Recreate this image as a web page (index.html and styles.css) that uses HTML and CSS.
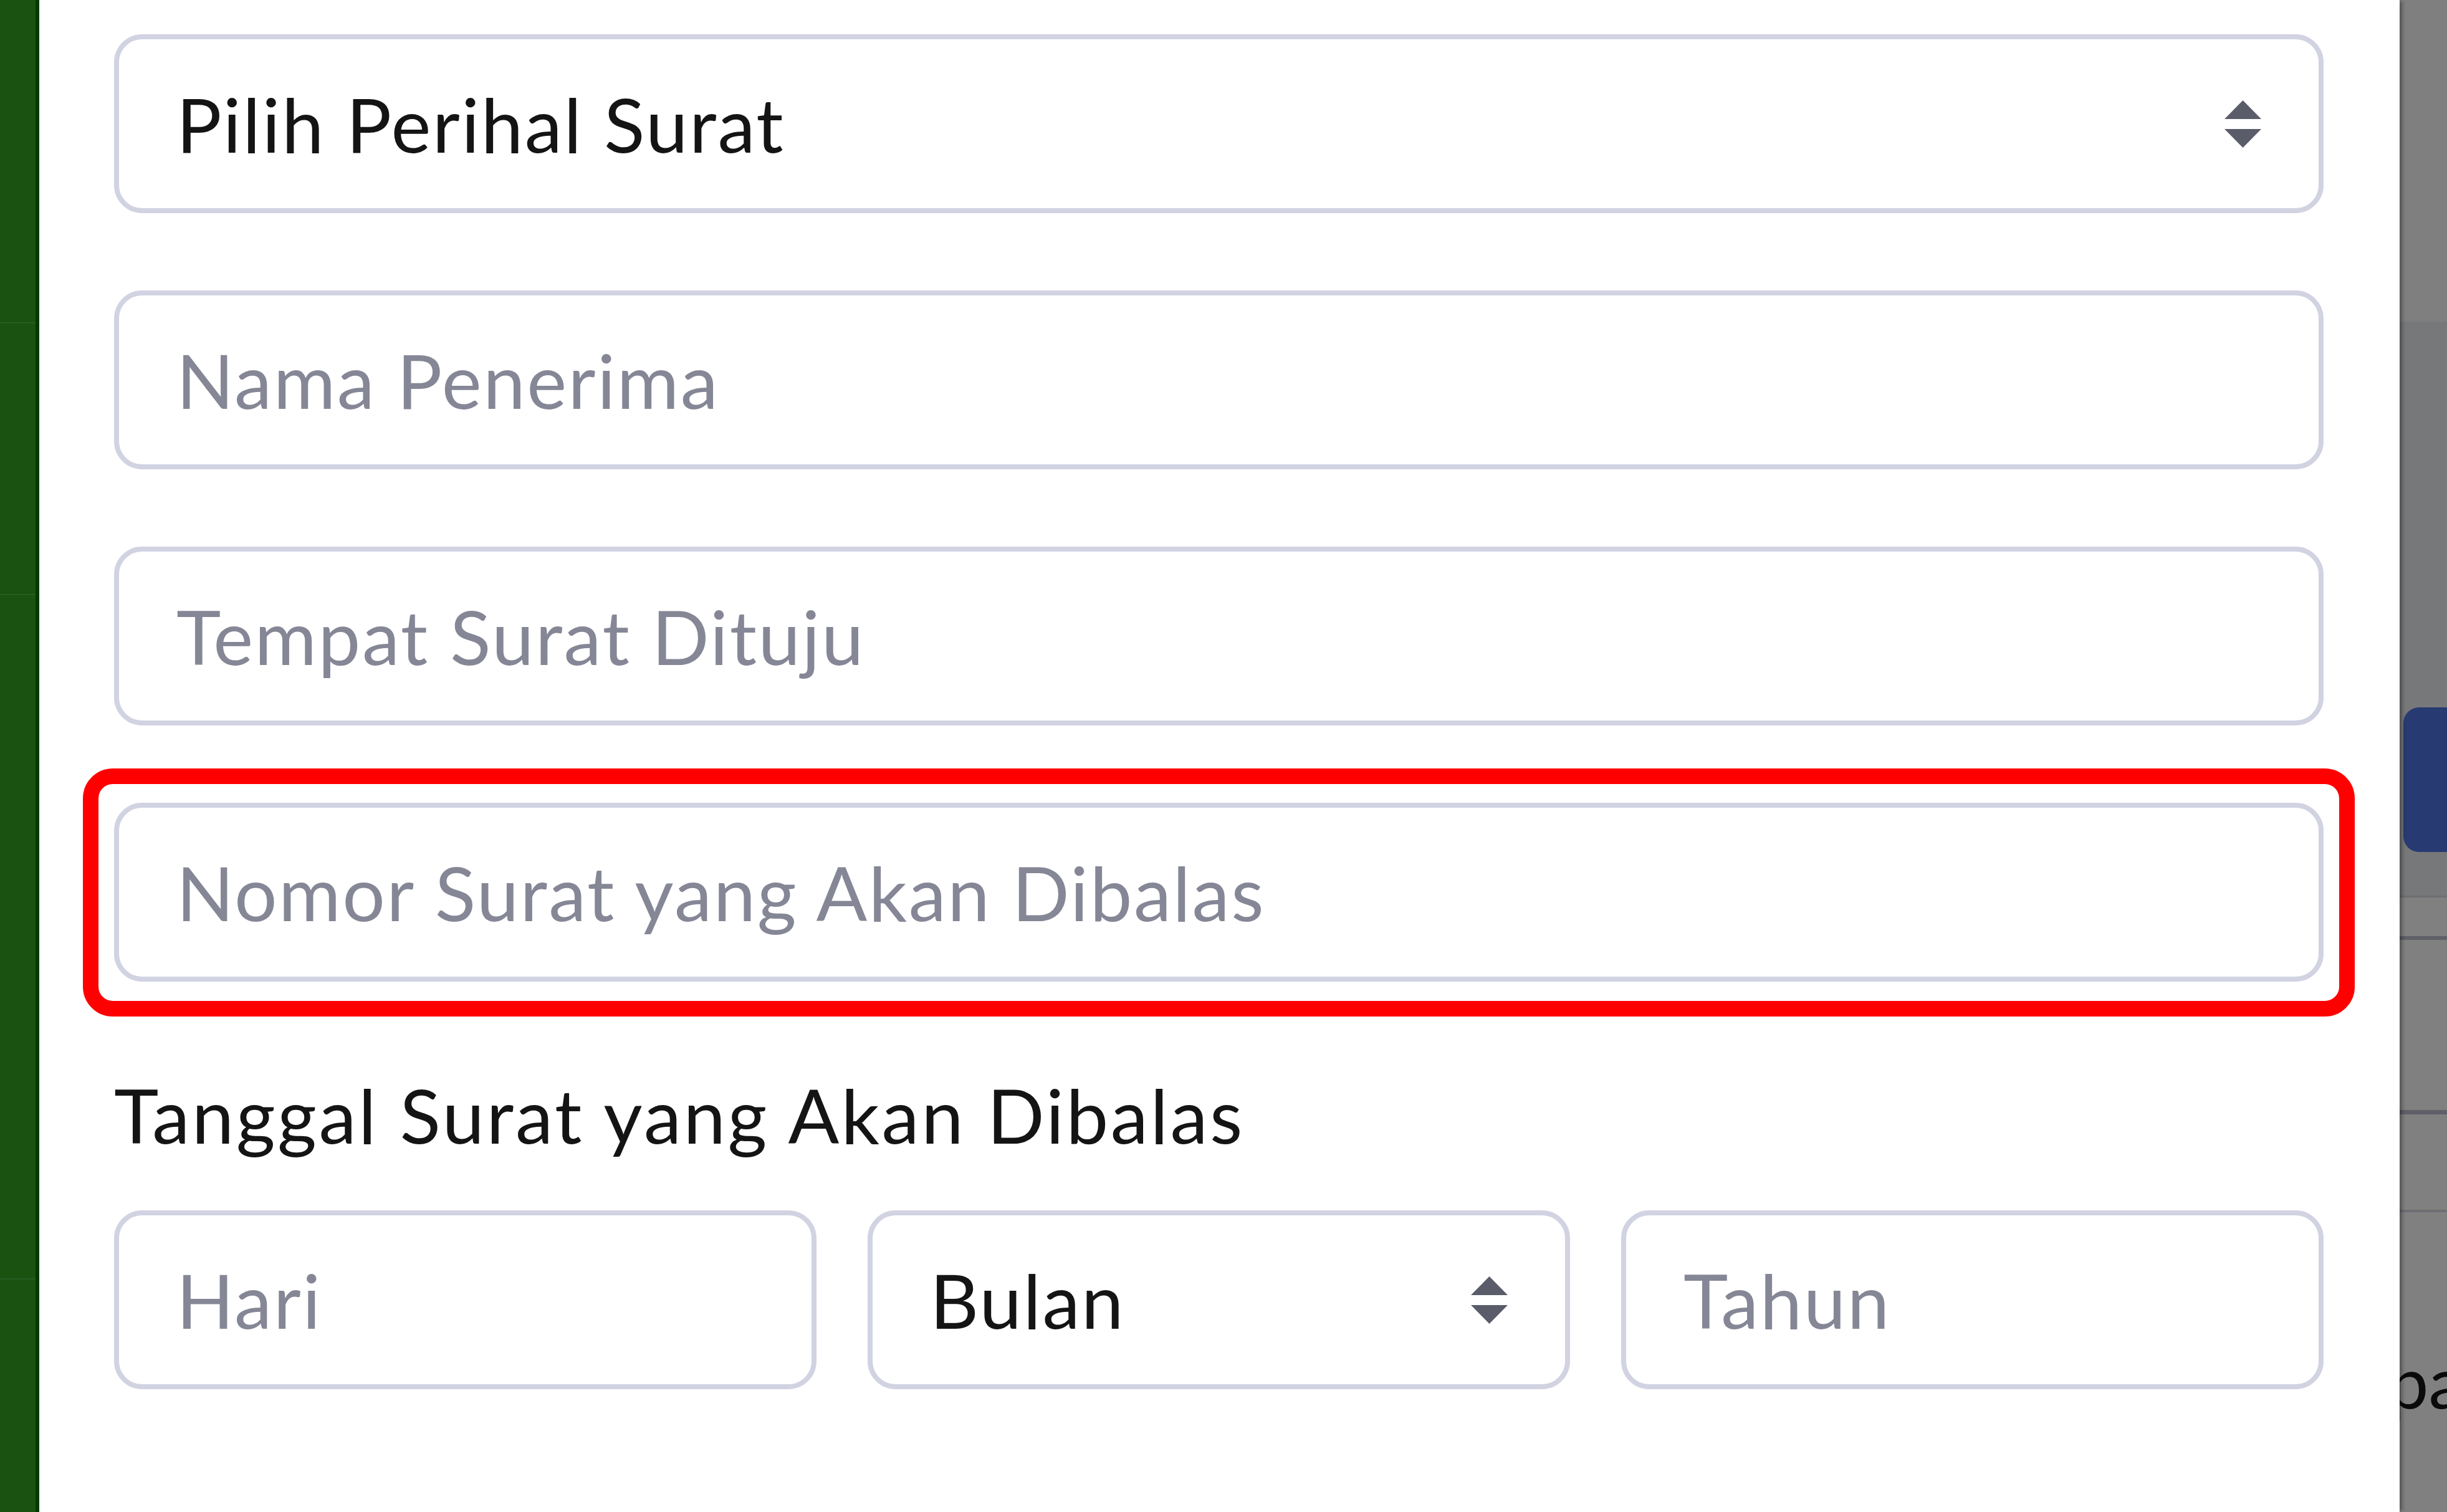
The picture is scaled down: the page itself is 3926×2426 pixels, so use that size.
FILE: index.html
```html
<!DOCTYPE html>
<html lang="id">
<head>
<meta charset="utf-8">
<title>Form Surat</title>
<link rel="stylesheet" href="styles.css">
</head>
<body>
<div class="page">
  <aside class="sidebar">
    <div class="sb-seg sb-1"></div>
    <div class="sb-seg sb-2"></div>
    <div class="sb-seg sb-3"></div>
    <div class="sb-rest"></div>
  </aside>

  <main class="modal">
    <form class="form">
      <div class="field select">
        <span class="value">Pilih Perihal Surat</span>
        <svg class="caret" viewBox="0 0 59 76" width="59" height="76" aria-hidden="true">
          <polygon points="29.5,0 59,30 0,30"/>
          <polygon points="0,46 59,46 29.5,76"/>
        </svg>
      </div>
      <div class="field"><span class="ph">Nama Penerima</span></div>
      <div class="field"><span class="ph">Tempat Surat Dituju</span></div>
      <div class="highlight">
        <div class="field field-last"><span class="ph">Nomor Surat yang Akan Dibalas</span></div>
      </div>
      <div class="label">Tanggal Surat yang Akan Dibalas</div>
      <div class="date-row">
        <div class="field"><span class="ph">Hari</span></div>
        <div class="field select">
          <span class="value">Bulan</span>
          <svg class="caret" viewBox="0 0 59 76" width="59" height="76" aria-hidden="true">
            <polygon points="29.5,0 59,30 0,30"/>
            <polygon points="0,46 59,46 29.5,76"/>
          </svg>
        </div>
        <div class="field"><span class="ph">Tahun</span></div>
      </div>
    </form>
  </main>

  <aside class="backdrop">
    <div class="bd-top"></div>
    <div class="bd-band">
      <div class="bd-button"><span class="bd-btn-text">I</span></div>
    </div>
    <div class="bd-line bd-line-1"></div>
    <div class="bd-gap bd-gap-1"></div>
    <div class="bd-line bd-line-2"></div>
    <div class="bd-gap bd-gap-2"></div>
    <div class="bd-line bd-line-3"></div>
    <div class="bd-gap bd-gap-3"></div>
    <div class="bd-line bd-line-4"></div>
    <div class="bd-rest"><span class="bd-text">pa</span></div>
  </aside>
</div>
</body>
</html>
```

FILE: styles.css
```css
* { box-sizing: border-box; }

html, body {
  margin: 0;
  padding: 0;
  width: 3926px;
  height: 2426px;
  overflow: hidden;
  background: #ffffff;
  font-family: "Lato", "Noto Sans", sans-serif;
}

.page {
  display: flex;
  width: 3926px;
  height: 2426px;
}

/* ---------- left dimmed sidebar ---------- */
.sidebar {
  width: 63px;
  flex: 0 0 63px;
  background: #1a5212;
  border-right: 6px solid #023b02;
  display: flex;
  flex-direction: column;
}
.sb-seg { border-bottom: 2px solid #2a5d24; }
.sb-1 { height: 519px; }
.sb-2 { height: 436px; }
.sb-3 { height: 1098px; }
.sb-rest { flex: 1; }

/* ---------- modal ---------- */
.modal {
  flex: 1;
  background: #ffffff;
  position: relative;
  z-index: 2;
  padding: 55px 122px 0 120px;
  box-shadow: 6px 0 6px -2px rgba(0, 0, 0, 0.35);
}

.form {
  display: flex;
  flex-direction: column;
}

.field {
  height: 287px;
  border: 8px solid #d1d3e2;
  border-radius: 45px;
  background: #ffffff;
  display: flex;
  align-items: center;
  justify-content: space-between;
  padding: 0 92px 0 92px;
  font-size: 121px;
  letter-spacing: 2.5px;
  margin-bottom: 124px;
}

.ph { color: #858796; }
.value { color: #141414; }

.caret { display: block; fill: #5a5c69; flex: 0 0 auto; }

.highlight {
  position: relative;
  margin-bottom: 124px;
}
.highlight .field-last { margin-bottom: 0; }
.highlight::after {
  content: "";
  position: absolute;
  top: -55px;
  bottom: -56px;
  left: -50px;
  right: -50px;
  border: 25px solid #ff0000;
  border-radius: 48px;
  pointer-events: none;
}

.label {
  font-size: 121px;
  line-height: 180px;
  letter-spacing: 3.5px;
  color: #141414;
  margin-bottom: 63px;
}

.date-row {
  display: grid;
  grid-template-columns: 1fr 1fr 1fr;
  column-gap: 82px;
}
.date-row .field { margin-bottom: 0; }

/* ---------- right dimmed page ---------- */
.backdrop {
  width: 76px;
  flex: 0 0 76px;
  background: #808080;
  display: flex;
  flex-direction: column;
  position: relative;
  z-index: 1;
}
.bd-top { height: 516px; background: #7f7f7f; flex: 0 0 auto; }
.bd-band {
  height: 921px;
  flex: 0 0 auto;
  background: #77787a;
  padding-top: 619px;
  padding-left: 6px;
}
.bd-button {
  height: 232px;
  background: #283a72;
  border-radius: 25px 0 0 25px;
  overflow: hidden;
  display: flex;
  align-items: center;
  padding-left: 66px;
}
.bd-btn-text {
  font-size: 60px;
  font-weight: 700;
  color: #8fc7d8;
  line-height: 1;
}
.bd-line { flex: 0 0 auto; }
.bd-line-1 { height: 3px; background: #6d6e72; }
.bd-gap { flex: 0 0 auto; background: #808080; }
.bd-gap-1 { height: 62px; }
.bd-line-2 { height: 6px; background: #5f6068; }
.bd-gap-2 { height: 273px; }
.bd-line-3 { height: 7px; background: #5e5f68; }
.bd-gap-3 { height: 153px; }
.bd-line-4 { height: 4px; background: #6e6f73; }
.bd-rest {
  flex: 1;
  background: #808080;
  padding-top: 213px;
  white-space: nowrap;
}
.bd-text {
  display: block;
  margin-left: -18px;
  font-size: 115px;
  line-height: 1;
  color: #0a0a0a;
}
```
